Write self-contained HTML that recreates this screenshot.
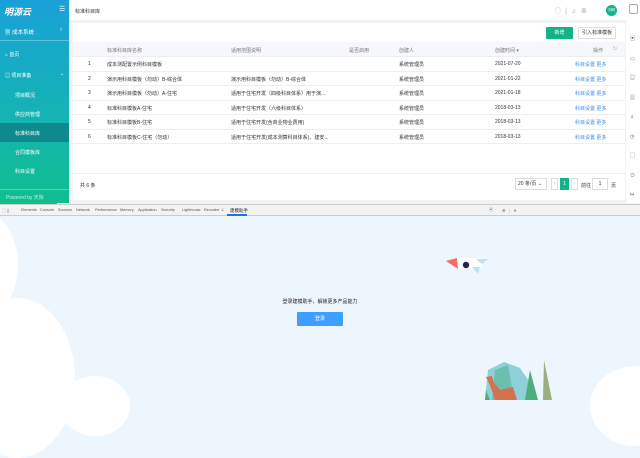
<!DOCTYPE html>
<html><head><meta charset="utf-8"><style>
*{margin:0;padding:0;box-sizing:border-box}
body{width:640px;height:400px;overflow:hidden;position:relative;font-family:"Liberation Sans","Noto Sans CJK SC",sans-serif;font-size:5px;color:#333;background:#eef6fd}
.a{position:absolute;white-space:nowrap}
#side{left:0;top:0;width:69px;height:203px;background:linear-gradient(180deg,#1aa0d8 0%,#14b2b8 50%,#10bd8e 100%);color:#fff}
#top{left:69px;top:0;width:571px;height:20px;background:#fff}
#main{left:69px;top:20px;width:557px;height:183px;background:#f0f2f5}
#card{left:73px;top:23px;width:552px;height:177px;background:#fff}
#rc{left:626px;top:20px;width:14px;height:183px;background:#fff}
.row{position:absolute;left:73px;width:552px;height:14.5px;border-bottom:1px solid #ebeef5}
.row span{position:absolute;top:4px}
.lk{color:#3a8ee6}
#dev{left:0;top:204px;width:640px;height:12px;background:#f3f3f3;border-top:1px solid #ccc;border-bottom:1px solid #ccc;color:#555;font-size:3.8px}
#dev span{position:absolute;top:3px}
.cl{position:absolute;background:#fff;border-radius:50%}
</style></head><body>
<div id="side" class="a">
<div class="a" style="left:4px;top:5px;font-size:9px;font-weight:bold;font-style:italic">明源云</div>
<div class="a" style="left:59px;top:5px;font-size:7px">☰</div>
<div class="a" style="left:0;top:22px;width:69px;height:19px;border-bottom:1px solid rgba(255,255,255,.3)"></div>
<div class="a" style="left:5px;top:28px;font-size:5.5px">▦ 成本系统</div><div class="a" style="left:60px;top:27px;font-size:6px">›</div>
<div class="a" style="left:5px;top:51px;font-size:5px">⌂ 首页</div>
<div class="a" style="left:5px;top:72px;font-size:5px">▤ 项目准备</div><div class="a" style="left:60px;top:71px;font-size:5px">⌄</div>
<div class="a" style="left:15px;top:92px">项目概况</div>
<div class="a" style="left:15px;top:111px">供应商管理</div>
<div class="a" style="left:0;top:123px;width:69px;height:19px;background:#0e8a8e"></div>
<div class="a" style="left:15px;top:130px">标准科目库</div>
<div class="a" style="left:15px;top:149px">合同模板库</div>
<div class="a" style="left:15px;top:168px">科目设置</div>
<div class="a" style="left:0;top:189px;width:69px;border-top:1px solid rgba(255,255,255,.3)"></div>
<div class="a" style="left:6px;top:194px;opacity:.75">Powered by 天际</div>
</div>
<div id="top" class="a"><div class="a" style="left:6px;top:8px">标准科目库</div>
<div class="a" style="left:486px;top:6px;font-size:6px;color:#999">◯ &nbsp;│&nbsp; ♫ &nbsp; ⊗</div>
<div class="a" style="left:537px;top:5px;width:11px;height:11px;border-radius:50%;background:#12b28a;color:#fff;font-size:3.5px;text-align:center;line-height:11px">刘明</div>
</div>
<div id="main" class="a"></div>
<div id="card" class="a"></div>
<div id="rc" class="a"><div class="a" style="left:4px;top:10px;color:#555;font-size:5px;line-height:19.5px">▣<br>▭<br>▤<br>▥<br>♫<br>◷<br>▢<br>⊙<br>↦</div></div>
<div class="a" style="left:629px;top:4px;width:9px;height:10px;border:1px solid #aaa;border-radius:2px"></div>
<div class="a" style="left:546px;top:27px;width:27px;height:12px;background:#12b28a;color:#fff;text-align:center;line-height:12px;border-radius:1px">新增</div>
<div class="a" style="left:578px;top:27px;width:38px;height:12px;border:1px solid #ddd;text-align:center;line-height:11px;border-radius:1px">引入标准模板</div>
<div class="a" style="left:73px;top:42px;width:552px;height:15px;background:#f5f7fa;color:#777;border-bottom:1px solid #ebeef5">
<span class="a" style="left:34px;top:5px">标准科目库名称</span><span class="a" style="left:158px;top:5px">适用范围说明</span><span class="a" style="left:276px;top:5px">是否启用</span><span class="a" style="left:326px;top:5px">创建人</span><span class="a" style="left:422px;top:5px">创建时间 ▾</span><span class="a" style="left:520px;top:5px">操作</span><span class="a" style="left:540px;top:4px;color:#aaa">↻</span></div>
<div class="row" style="top:57px"><span style="left:15px">1</span><span style="left:34px">成本测配置示例科目模板</span><span style="left:326px">系统管理员</span><span style="left:422px">2021-07-20</span><span class="lk" style="left:502px">科目设置 更多</span></div>
<div class="row" style="top:71.5px"><span style="left:15px">2</span><span style="left:34px">演示用科目模板（勿动）B-综合体</span><span style="left:158px">演示用科目模板（勿动）B-综合体</span><span style="left:326px">系统管理员</span><span style="left:422px">2021-01-22</span><span class="lk" style="left:502px">科目设置 更多</span></div>
<div class="row" style="top:86px"><span style="left:15px">3</span><span style="left:34px">演示用科目模板（勿动）A-住宅</span><span style="left:158px">适用于住宅开发（四级科目体系）用于演...</span><span style="left:326px">系统管理员</span><span style="left:422px">2021-01-18</span><span class="lk" style="left:502px">科目设置 更多</span></div>
<div class="row" style="top:100.5px"><span style="left:15px">4</span><span style="left:34px">标准科目模板A-住宅</span><span style="left:158px">适用于住宅开发（六级科目体系）</span><span style="left:326px">系统管理员</span><span style="left:422px">2018-03-13</span><span class="lk" style="left:502px">科目设置 更多</span></div>
<div class="row" style="top:115px"><span style="left:15px">5</span><span style="left:34px">标准科目模板B-住宅</span><span style="left:158px">适用于住宅开发(含商业物业费用)</span><span style="left:326px">系统管理员</span><span style="left:422px">2018-03-13</span><span class="lk" style="left:502px">科目设置 更多</span></div>
<div class="row" style="top:129.5px"><span style="left:15px">6</span><span style="left:34px">标准科目模板C-住宅（勿动）</span><span style="left:158px">适用于住宅开发(成本测算科目体系)、建安...</span><span style="left:326px">系统管理员</span><span style="left:422px">2018-03-13</span><span class="lk" style="left:502px">科目设置 更多</span></div>
<div class="a" style="left:73px;top:173px;width:552px;border-top:1px solid #ebeef5"></div>
<div class="a" style="left:80px;top:182px">共 6 条</div>
<div class="a" style="left:515px;top:178px;width:32px;height:12px;border:1px solid #ddd;line-height:10px;padding-left:2px">20 条/页 ⌄</div>
<div class="a" style="left:551px;top:178px;width:7px;height:12px;border:1px solid #ddd;line-height:10px;text-align:center;color:#aaa">‹</div>
<div class="a" style="left:560px;top:178px;width:9px;height:12px;background:#12b28a;color:#fff;line-height:12px;text-align:center">1</div>
<div class="a" style="left:571px;top:178px;width:7px;height:12px;border:1px solid #ddd;line-height:10px;text-align:center;color:#aaa">›</div>
<div class="a" style="left:581px;top:182px">前往</div>
<div class="a" style="left:592px;top:178px;width:16px;height:12px;border:1px solid #ddd;line-height:10px;text-align:center">1</div>
<div class="a" style="left:611px;top:182px">页</div>
<div class="a" style="left:0;top:200px;width:57px;height:4px;background:#10bd8e"></div>
<div id="dev" class="a">
<span style="left:2px">⬚ ▯</span><span style="left:21px">Elements</span><span style="left:40px">Console</span><span style="left:58px">Sources</span><span style="left:76px">Network</span><span style="left:95px">Performance</span><span style="left:120px">Memory</span><span style="left:138px">Application</span><span style="left:161px">Security</span><span style="left:182px">Lighthouse</span><span style="left:204px">Recorder ⊥</span><span style="left:230px;color:#222;font-size:4.5px">建模助手</span>
<div class="a" style="left:227px;top:9px;width:20px;height:2px;background:#1a73e8"></div>
<span style="left:489px;color:#1a73e8">▣</span><span style="left:502px">⚙ &nbsp;⋮ &nbsp;✕</span></div>
<div class="cl" style="left:-60px;top:210px;width:78px;height:110px"></div>
<div class="cl" style="left:-40px;top:298px;width:115px;height:160px"></div>
<div class="cl" style="left:60px;top:376px;width:70px;height:60px"></div>
<div class="cl" style="left:590px;top:366px;width:90px;height:80px"></div>
<div class="a" style="left:320px;top:298px;transform:translateX(-50%);color:#222;font-size:5px">登录建模助手，解锁更多产品能力</div>
<div class="a" style="left:297px;top:312px;width:46px;height:14px;background:#409eff;color:#fff;text-align:center;line-height:14px;border-radius:1px">登录</div>
<svg class="a" style="left:440px;top:250px" width="200" height="150" viewBox="0 0 200 150">
<polygon points="6,11 17,8 18,19" fill="#f36b6b"/>
<path d="M17,8 L40,8 Q44,13 40,18 L18,19Z" fill="#fff"/>
<path d="M36,9 L48,9 L42,14Z" fill="#bfe0f5"/>
<path d="M32,17 L40,17 L38,24Z" fill="#bfe0f5"/>
<circle cx="26" cy="15" r="3.2" fill="#22224a"/>
<path d="M48,120 L64,112 L80,118 L95,140 L97,150 L45,150Z" fill="#8fcfd8"/>
<path d="M55,120 L68,115 L74,150 L52,150Z" fill="#6cbfae"/>
<path d="M85,150 L90,120 L98,150Z" fill="#4fae7e"/>
<path d="M103,150 L104,110 L112,150Z" fill="#9caf7e"/>
<path d="M46,127 L52,126 L54,133 L60,140 L73,137 L77,150 L55,150 L50,135Z" fill="#d0734e"/>
<path d="M45,150 L46,140 L50,150Z" fill="#4fae7e"/>
</svg>
</body></html>
